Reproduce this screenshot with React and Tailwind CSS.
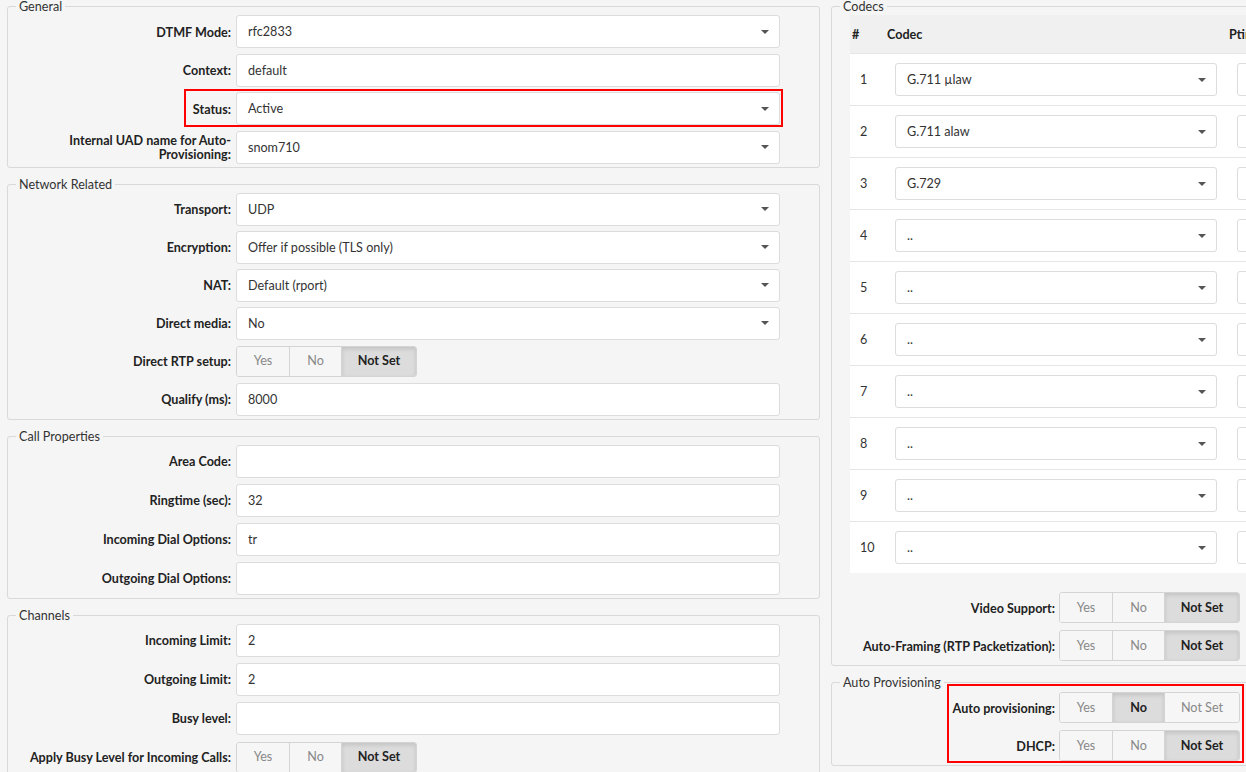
const LABEL = "w-[215px] shrink-0 pt-[2px] text-right text-[12.6px] font-bold leading-[14px] text-[#222]";

function Caret() {
  return (
    <svg width="8" height="4" viewBox="0 0 8 4" className="shrink-0">
      <path d="M0 0H8L4 4Z" fill="#555" />
    </svg>
  );
}

function Select({ value, w = "w-[544px]" }) {
  return (
    <div className={`flex h-[33px] ${w} items-center justify-between rounded-[3px] border border-[#dcdcdc] bg-white pl-[11px] pr-[10px] text-[12.6px] text-[#333]`}>
      <span className="pt-[2px]">{value}</span>
      <Caret />
    </div>
  );
}

function Input({ value, w = "w-[544px]" }) {
  return (
    <div className={`flex h-[33px] ${w} items-center rounded-[3px] border border-[#dcdcdc] bg-white px-[11px] pt-[2px] text-[12.6px] text-[#333]`}>
      {value}
    </div>
  );
}

function Toggle({ active }) {
  const opts = [
    { t: "Yes", w: "w-[52px]" },
    { t: "No", w: "w-[52px]" },
    { t: "Not Set", w: "w-[75px]" },
  ];
  return (
    <div className="flex h-[31px] overflow-hidden rounded-[3px] border border-[#d4d4d4]">
      {opts.map((o, i) => (
        <div
          key={o.t}
          className={`flex ${o.w} items-center justify-center pt-[1px] text-[12.6px] ${i > 0 ? "border-l border-[#d4d4d4]" : ""} ${
            o.t === active
              ? "bg-[#dcdcdc] font-bold text-[#222] shadow-[inset_0_2px_4px_rgba(0,0,0,0.12)]"
              : "bg-[#f6f6f6] text-[#888]"
          }`}
        >
          {o.t}
        </div>
      ))}
    </div>
  );
}

function Row({ label, children, right }) {
  return (
    <div className="flex h-[33px] items-center">
      <label className={LABEL}>{label}</label>
      <div className={right ? "ml-[4px]" : "ml-[5px]"}>{children}</div>
    </div>
  );
}

function Box({ title, children, className = "" }) {
  return (
    <fieldset className={`mb-[10px] rounded-[3px] border border-[#d9d9d9] px-[8px] pb-[3px] ${className}`}>
      <legend className="px-[3px] text-[12.6px] leading-[13px] text-[#333]">{title}</legend>
      <div className="pt-[2px]">{children}</div>
    </fieldset>
  );
}

const codecs = ["G.711 µlaw", "G.711 alaw", "G.729", "..", "..", "..", "..", "..", "..", ".."];

export default function App() {
  return (
    <div className="flex h-[772px] w-[1246px] items-start gap-[11px] overflow-hidden bg-[#f5f5f5] pl-[7px] font-['Lato',sans-serif]">
      <div className="w-[813px] shrink-0">
        <Box title="General">
          <div className="flex flex-col gap-[5.5px]">
            <Row label="DTMF Mode:"><Select value="rfc2833" /></Row>
            <Row label="Context:"><Input value="default" /></Row>
            <div className="relative">
              <Row label="Status:"><Select value="Active" /></Row>
              <div className="pointer-events-none absolute -top-[3px] left-[168px] h-[38px] w-[599px] border-2 border-[#ff0000]" />
            </div>
            <Row label="Internal UAD name for Auto-Provisioning:"><Select value="snom710" /></Row>
          </div>
        </Box>

        <Box title="Network Related">
          <div className="flex flex-col gap-[5px]">
            <Row label="Transport:"><Select value="UDP" /></Row>
            <Row label="Encryption:"><Select value="Offer if possible (TLS only)" /></Row>
            <Row label="NAT:"><Select value="Default (rport)" /></Row>
            <Row label="Direct media:"><Select value="No" /></Row>
            <Row label="Direct RTP setup:"><Toggle active="Not Set" /></Row>
            <Row label="Qualify (ms):"><Input value="8000" /></Row>
          </div>
        </Box>

        <Box title="Call Properties">
          <div className="flex flex-col gap-[6px]">
            <Row label="Area Code:"><Input value="" /></Row>
            <Row label="Ringtime (sec):"><Input value="32" /></Row>
            <Row label="Incoming Dial Options:"><Input value="tr" /></Row>
            <Row label="Outgoing Dial Options:"><Input value="" /></Row>
          </div>
        </Box>

        <Box title="Channels">
          <div className="flex flex-col gap-[6px]">
            <Row label="Incoming Limit:"><Input value="2" /></Row>
            <Row label="Outgoing Limit:"><Input value="2" /></Row>
            <Row label="Busy level:"><Input value="" /></Row>
            <Row label="Apply Busy Level for Incoming Calls:"><Toggle active="Not Set" /></Row>
          </div>
        </Box>
      </div>

      <div className="w-[560px] shrink-0">
        <Box title="Codecs">
          <div className="ml-[10px] w-[600px]">
            <div className="flex h-[38px] items-center bg-[#f0f0f0] pt-[2px] text-[12.6px] font-bold text-[#222]">
              <span className="w-[37px] pl-[2px]">#</span>
              <span className="w-[342px]">Codec</span>
              <span>Ptime</span>
            </div>
            {codecs.map((c, i) => (
              <div key={i} className="flex h-[52px] items-center border-t border-[#e6e6e6] bg-white">
                <span className="w-[45px] pl-[10px] pt-[2px] text-[12.6px] text-[#333]">{i + 1}</span>
                <Select value={c} w="w-[322px]" />
                <div className="ml-[20px] h-[33px] w-[100px] rounded-[3px] border border-[#dcdcdc] bg-white" />
              </div>
            ))}
          </div>
          <div className="mt-[18px] flex flex-col gap-[5px]">
            <Row right label="Video Support:"><Toggle active="Not Set" /></Row>
            <Row right label="Auto-Framing (RTP Packetization):"><Toggle active="Not Set" /></Row>
          </div>
        </Box>

        <Box title="Auto Provisioning">
          <div className="relative flex flex-col gap-[5px]">
            <Row right label="Auto provisioning:"><Toggle active="No" /></Row>
            <Row right label="DHCP:"><Toggle active="Not Set" /></Row>
            <div className="pointer-events-none absolute -top-[7px] left-[107px] h-[79px] w-[297px] border-2 border-[#ff0000]" />
          </div>
        </Box>
      </div>
    </div>
  );
}
